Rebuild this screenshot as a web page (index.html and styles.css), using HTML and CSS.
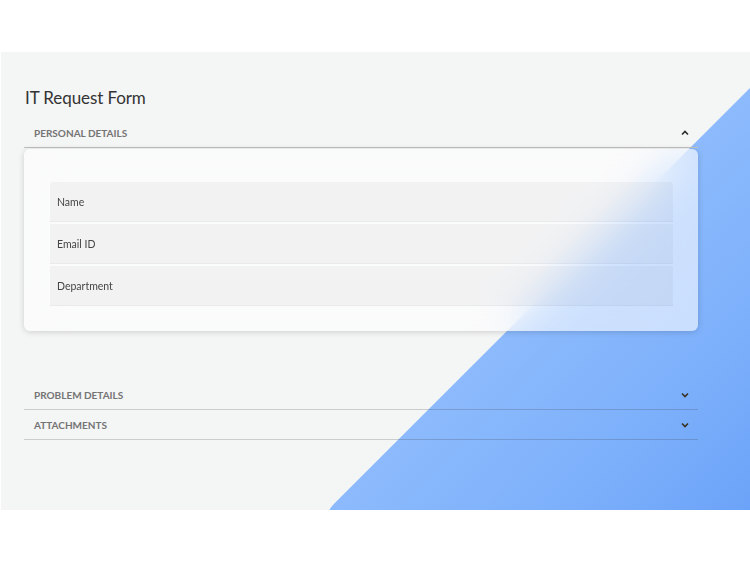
FILE: index.html
```html
<!DOCTYPE html>
<html>
<head>
<meta charset="utf-8">
<link rel="stylesheet" href="styles.css">
</head>
<body>
<div class="panel">
  <div class="blob"></div>
  <div class="content">
    <h1 class="title">IT Request Form</h1>
    <div class="section open">
      <div class="sec-head">
        <span class="sec-label">PERSONAL DETAILS</span>
        <svg class="chev" width="8" height="6" viewBox="0 0 8 6"><path d="M1 4.5 L4 1.5 L7 4.5" fill="none" stroke="#2a2a2a" stroke-width="1.6"/></svg>
      </div>
      <div class="card">
        <div class="fields">
          <div class="field first">Name</div>
          <div class="field">Email ID</div>
          <div class="field">Department</div>
        </div>
      </div>
    </div>
    <div class="section closed first-closed">
      <div class="sec-head bordered">
        <span class="sec-label">PROBLEM DETAILS</span>
        <svg class="chev" width="8" height="6" viewBox="0 0 8 6"><path d="M1 1.5 L4 4.5 L7 1.5" fill="none" stroke="#3a3222" stroke-width="1.6"/></svg>
      </div>
    </div>
    <div class="section closed">
      <div class="sec-head bordered">
        <span class="sec-label">ATTACHMENTS</span>
        <svg class="chev" width="8" height="6" viewBox="0 0 8 6"><path d="M1 1.5 L4 4.5 L7 1.5" fill="none" stroke="#3a3222" stroke-width="1.6"/></svg>
      </div>
    </div>
  </div>
</div>
</body>
</html>
```
FILE: styles.css
```css
html, body {
  margin: 0;
  padding: 0;
  background: #ffffff;
}
body {
  font-family: "Source Sans Pro", "Lato", "Noto Sans", sans-serif;
}
.panel {
  position: relative;
  margin: 52px 0 0 1px;
  width: 749px;
  height: 458px;
  background: #f4f5f5;
  overflow: hidden;
}
.blob {
  position: absolute;
  left: 519px;
  top: -27px;
  width: 1000px;
  height: 1000px;
  border-radius: 30px;
  transform: rotate(45deg);
  background: linear-gradient(to right, #8cbafc 0, #7eb1fb 150px, #6aa2f8 310px);
}
.content {
  position: relative;
  padding: 0 52px 0 23px;
  display: flex;
  flex-direction: column;
}
.title {
  margin: 35px 0 0 1px;
  font-weight: 400;
  font-size: 17px;
  line-height: 22px;
  color: #333333;
  letter-spacing: -0.1px;
}
.sec-head {
  height: 29px;
  display: flex;
  align-items: center;
  justify-content: space-between;
  padding: 0 10px 0 10px;
}
.open .sec-head {
  margin-top: 9px;
  height: 29px;
  border-bottom: 1px solid #c0c0c0;
}
.sec-label {
  font-size: 10px;
  font-weight: 700;
  color: #747474;
  letter-spacing: 0;
  padding-top: 1px;
}
.chev {
  display: block;
  margin-right: -1px;
}
.card {
  margin-top: 1px;
  border-radius: 6px;
  background: rgba(255, 255, 255, 0.58);
  backdrop-filter: blur(20px);
  box-shadow: 0 1px 6px rgba(0, 0, 0, 0.16);
  padding: 33px 25px 25px 26px;
}
.fields {
  display: flex;
  flex-direction: column;
  gap: 2px;
}
.field {
  height: 40px;
  display: flex;
  align-items: center;
  padding-left: 7px;
  font-size: 10.5px;
  color: #454545;
  background: rgba(40, 50, 60, 0.045);
  box-shadow: inset 0 -1px 0 rgba(0, 0, 0, 0.03);
}
.field.first {
  border-radius: 4px 4px 0 0;
}
.first-closed {
  margin-top: 49px;
}
.sec-head.bordered {
  border-bottom: 1px solid rgba(60, 60, 60, 0.22);
}
```
